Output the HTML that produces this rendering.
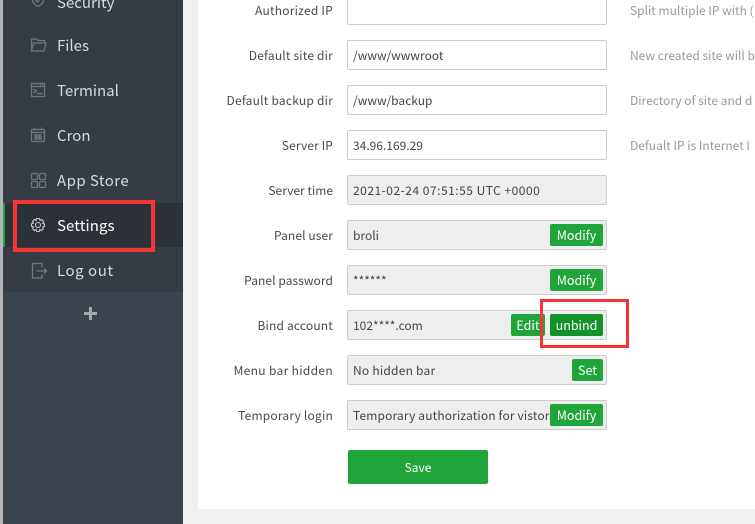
<!DOCTYPE html>
<html><head><meta charset="utf-8">
<style>
*{box-sizing:border-box}
html,body{margin:0;padding:0;width:755px;height:524px;overflow:hidden;background:#f0f0f0;font-family:"Noto Sans CJK SC","Liberation Sans",sans-serif;font-size:12px;color:#555}
.a{position:absolute;white-space:nowrap}
#strip{left:0;top:0;width:3px;height:524px;background:#b5b5b5}
#side{left:3px;top:0;width:180px;height:524px;background:#3c444d}
#menu{left:3px;top:0;width:180px;height:292px;background:#363c43}
#act{left:3px;top:203px;width:180px;height:44px;background:#2c3037}
#bar{left:3px;top:203px;width:2px;height:44px;background:#20a53a}
.m{left:57px;font-size:15px;line-height:20px;color:#d6dadd;margin-top:1px}
#panel{left:198px;top:0;width:557px;height:509px;background:#fff}
.l{right:422px;font-size:12px;line-height:16px;color:#4a4a4a;text-align:right;margin-top:1px}
.i{left:347px;width:260px;height:30px;border:1px solid #ccc;border-radius:2px;background:#fff;font-size:12px;line-height:30px;padding-left:5px;color:#444;overflow:hidden}
.g{background:#eee}
.h{left:630px;font-size:12px;line-height:16px;color:#999;margin-top:1px}
.b{height:22px;background:#20a53a;color:#fff;border-radius:2px;font-size:12.500px;line-height:22px;text-align:center}
svg{position:absolute;fill:none;stroke:#70767b;stroke-width:1.300}
</style></head><body>
<div class="a" id="strip"></div>
<div class="a" id="side"></div>
<div class="a" id="menu"></div>
<div class="a" id="act"></div>
<div class="a" id="bar"></div>

<svg style="left:30px;top:-8px" width="16" height="16" viewBox="0 0 16 16"><path d="M8 1.500 2.500 3.500V8c0 3 2.500 5 5.500 6.500C11 13 13.500 11 13.500 8V3.500Z"/><path d="M5.500 8 7.500 10 10.500 6.500"/></svg>
<div class="a m" style="top:-8px">Security</div>

<svg style="left:30px;top:37px" width="17" height="16" viewBox="0 0 17 16"><path d="M1.500 14V2H6.500L8 3.500H14.500V6"/><path d="M1.500 14 3.500 6H16L14 14Z"/></svg>
<div class="a m" style="top:35px">Files</div>

<svg style="left:30px;top:82px" width="16" height="16" viewBox="0 0 16 16"><rect x="1.500" y="1.500" width="13" height="13"/><path d="M1.500 4.500H14.500M3.500 7 6.500 9 3.500 11M7 11.500H12.500"/><path d="M10 3H14" stroke-dasharray="1 1"/></svg>
<div class="a m" style="top:80px">Terminal</div>

<svg style="left:30px;top:127px" width="16" height="16" viewBox="0 0 16 16"><rect x="1.500" y="2.500" width="13" height="12" rx="1"/><path d="M4.500 .5V3.500M11.500 .5V3.500M1.500 5.500H14.500M4 8H12M4 10H12M4 12H12M6.500 7.500V12.500M9.500 7.500V12.500"/></svg>
<div class="a m" style="top:125px">Cron</div>

<svg style="left:30px;top:172px" width="17" height="17" viewBox="0 0 17 17"><rect x="1.500" y="1.500" width="6" height="6" rx="1.200"/><rect x="9.500" y="1.500" width="6" height="6" rx="1.200"/><rect x="1.500" y="9.500" width="6" height="6" rx="1.200"/><rect x="9.500" y="9.500" width="6" height="6" rx="1.200"/></svg>
<div class="a m" style="top:170px;letter-spacing:.45px">App Store</div>

<svg style="left:30px;top:217px;stroke:#c4c7ca;stroke-width:1.100" width="16" height="16" viewBox="0 0 16 16"><path d="M6.500 1.500H9.500L10 3.500 11.800 2.600 13.700 4.800 12.500 6.300 14.500 7V9.500L12.500 10 13.400 11.800 11.300 13.700 9.900 12.500 9.300 14.500H6.700L6.100 12.500 4.600 13.700 2.400 11.700 3.500 10 1.500 9.400V6.800L3.500 6.200 2.500 4.500 4.500 2.500 6 3.500Z"/><circle cx="8" cy="8" r="2.500"/></svg>
<div class="a m" style="top:215px;color:#fff;letter-spacing:.1px">Settings</div>

<svg style="left:31px;top:262px" width="16" height="18" viewBox="0 0 16 18"><path d="M11 5.500V1.500H1.500V16H11V12.500M5.500 9H15.500M13 6.500 15.500 9 13 11.500"/></svg>
<div class="a m" style="top:260px;letter-spacing:.55px">Log out</div>

<div class="a" style="left:84px;top:312px;width:13px;height:3px;background:#a5a8ab"></div>
<div class="a" style="left:89px;top:307px;width:3px;height:13px;background:#a5a8ab"></div>

<div class="a" id="panel"></div>

<div class="a l" style="top:2px;letter-spacing:.23px">Authorized IP</div>
<div class="a i" style="top:-5px"></div>
<div class="a h" style="top:2px">Split multiple IP with (</div>

<div class="a l" style="top:47px;letter-spacing:.19px">Default site dir</div>
<div class="a i" style="top:40px">/www/wwwroot</div>
<div class="a h" style="top:47px">New created site will b</div>

<div class="a l" style="top:92px;letter-spacing:.22px">Default backup dir</div>
<div class="a i" style="top:85px">/www/backup</div>
<div class="a h" style="top:92px">Directory of site and d</div>

<div class="a l" style="top:137px;letter-spacing:.11px">Server IP</div>
<div class="a i" style="top:130px">34.96.169.29</div>
<div class="a h" style="top:137px">Defualt IP is Internet I</div>

<div class="a l" style="top:182px">Server time</div>
<div class="a i g" style="top:175px;letter-spacing:.5px">2021-02-24 07:51:55 UTC +0000</div>

<div class="a l" style="top:227px;letter-spacing:.1px">Panel user</div>
<div class="a i g" style="top:220px">broli</div>
<div class="a b" style="left:550px;top:224px;width:53px">Modify</div>

<div class="a l" style="top:272px;letter-spacing:.07px">Panel password</div>
<div class="a i g" style="top:265px">******</div>
<div class="a b" style="left:550px;top:269px;width:53px">Modify</div>

<div class="a l" style="top:317px;letter-spacing:.17px">Bind account</div>
<div class="a i g" style="top:310px">102****.com</div>
<div class="a b" style="left:511px;top:314px;width:34px">Edit</div>
<div class="a b" style="left:550px;top:314px;width:53px;background:#15912a">unbind</div>

<div class="a l" style="top:362px;letter-spacing:.33px">Menu bar hidden</div>
<div class="a i g" style="top:355px;letter-spacing:.23px">No hidden bar</div>
<div class="a b" style="left:572px;top:359px;width:31px">Set</div>

<div class="a l" style="top:407px;letter-spacing:.2px">Temporary login</div>
<div class="a i g" style="top:400px;letter-spacing:.15px">Temporary authorization for vistor</div>
<div class="a b" style="left:550px;top:404px;width:53px">Modify</div>

<div class="a" style="left:348px;top:450px;width:140px;height:34px;background:#20a53a;border-radius:2px;color:#fff;font-size:12px;line-height:36px;text-align:center">Save</div>

<div class="a" style="left:13px;top:200px;width:142px;height:52px;border:4px solid #f33535"></div>
<div class="a" style="left:540px;top:299px;width:89px;height:49px;border:3px solid #f33535"></div>
</body></html>
